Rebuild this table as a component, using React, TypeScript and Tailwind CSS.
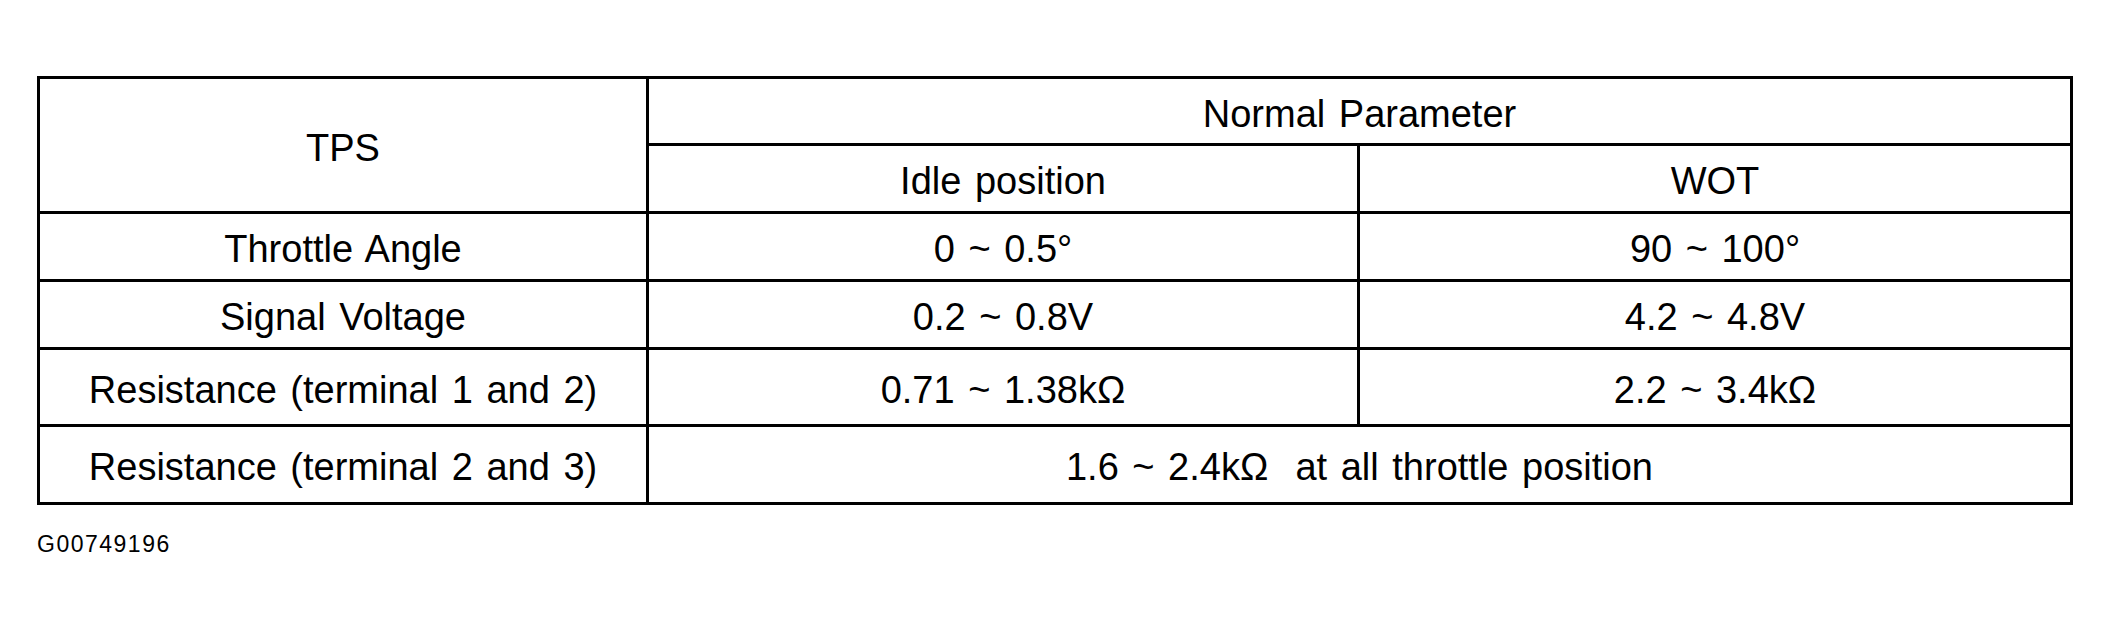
const cell = "bg-white flex items-center justify-center pt-[5px] text-black whitespace-pre [word-spacing:3px]";

const rows = [
  { label: "Throttle Angle", idle: "0 ~ 0.5°", wot: "90 ~ 100°" },
  { label: "Signal Voltage", idle: "0.2 ~ 0.8V", wot: "4.2 ~ 4.8V" },
  { label: "Resistance (terminal 1 and 2)", idle: "0.71 ~ 1.38kΩ", wot: "2.2 ~ 3.4kΩ" },
];

export default function App() {
  return (
    <div
      className="w-full h-[626px] bg-white pt-[76px] pl-[37px]"
      style={{ fontFamily: '"Liberation Sans", Arial, sans-serif' }}
    >
      <div className="grid w-[2036px] bg-black p-[3px] gap-[3px] grid-cols-[606px_708px_710px] grid-rows-[64px_65px_65px_65px_74px_75px] text-[38px] leading-none">
        <div className={`${cell} row-span-2`}>TPS</div>
        <div className={`${cell} col-span-2`}>Normal Parameter</div>
        <div className={cell}>Idle position</div>
        <div className={cell}>WOT</div>

        {rows.map((r) => (
          <>
            <div key={r.label} className={cell}>{r.label}</div>
            <div className={cell}>{r.idle}</div>
            <div className={cell}>{r.wot}</div>
          </>
        ))}

        <div className={cell}>Resistance (terminal 2 and 3)</div>
        <div className={`${cell} col-span-2`}>1.6 ~ 2.4kΩ  at all throttle position</div>
      </div>

      <div className="mt-[28px] text-[23px] leading-[23px] tracking-[1.5px] text-black">G00749196</div>
    </div>
  );
}
